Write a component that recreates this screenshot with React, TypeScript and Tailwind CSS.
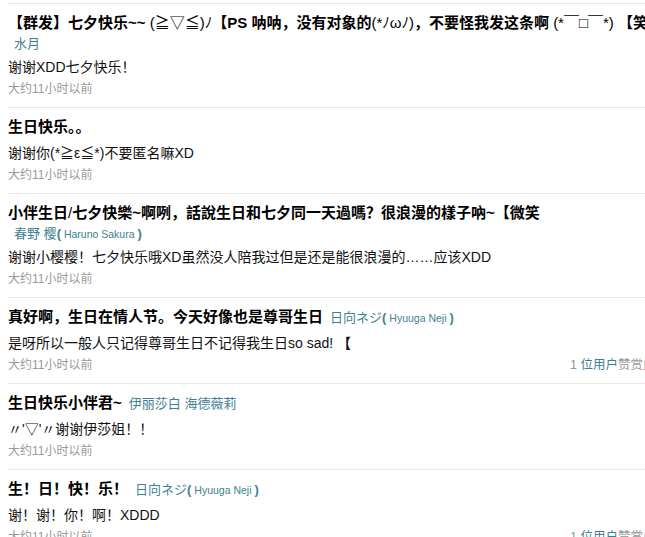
import React from "react";

const FONT = '"Liberation Sans", "Noto Sans CJK SC", sans-serif';

function Name({ cn, en }: { cn: string; en?: string }) {
  return (
    <span className="text-[13px] text-[#3f7f92] font-normal">
      {cn}
      {en && (
        <>
          <span className="font-bold">(</span>
          <span className="text-[10.5px]"> {en} </span>
          <span className="font-bold">)</span>
        </>
      )}
    </span>
  );
}

function Likes() {
  return (
    <span className="text-[12.5px]">
      <span className="text-[#7f9aa3]">1 </span>
      <span className="text-[#3f7f92]">位用户</span>
      <span className="text-[#999]">赞赏此条</span>
    </span>
  );
}

type Item = {
  title: React.ReactNode;
  inlineName?: React.ReactNode;
  belowName?: React.ReactNode;
  body: React.ReactNode;
  likes?: boolean;
};

const items: Item[] = [
  {
    title: (
      <>
        【群发】七夕快乐~~ <span className="font-normal">(≧▽≦)ﾉ</span>【PS 呐呐，没有对象的
        <span className="font-normal">(*ﾉωﾉ)</span>，不要怪我发这条啊{" "}
        <span className="font-normal">(*￣□￣*)</span> 【笑一个吧】
      </>
    ),
    belowName: <Name cn="水月" />,
    body: <>谢谢XDD七夕快乐！</>,
  },
  {
    title: <>生日快乐。。</>,
    body: <>谢谢你(*≧ε≦*)不要匿名嘛XD</>,
  },
  {
    title: (
      <>
        小伴生日<span className="font-normal">/</span>七夕快樂~啊咧，話說生日和七夕同一天過嗎？很浪漫的樣子吶~【微笑
      </>
    ),
    belowName: <Name cn="春野 樱" en="Haruno Sakura" />,
    body: <>谢谢小樱樱！七夕快乐哦XD虽然没人陪我过但是还是能很浪漫的……应该XDD</>,
  },
  {
    title: <>真好啊，生日在情人节。今天好像也是尊哥生日</>,
    inlineName: <Name cn="日向ネジ" en="Hyuuga Neji" />,
    body: (
      <>
        是呀所以一般人只记得尊哥生日不记得我生日so sad! <span className="font-bold">【</span>
      </>
    ),
    likes: true,
  },
  {
    title: <>生日快乐小伴君~</>,
    inlineName: <Name cn="伊丽莎白 海德薇莉" />,
    body: <>〃'▽'〃谢谢伊莎姐！！</>,
  },
  {
    title: <>生！日！快！乐！</>,
    inlineName: <Name cn="日向ネジ" en="Hyuuga Neji" />,
    body: <>谢！谢！你！啊！XDDD</>,
    likes: true,
  },
];

export default function App() {
  return (
    <div
      className="w-[645px] h-[537px] overflow-hidden bg-white pt-[3px] pl-2"
      style={{ fontFamily: FONT }}
    >
      <div className="w-[660px]">
        {items.map((it, i) => (
          <div key={i} className="border-t border-[#e8e8e8] pt-2 pb-2">
            <div className="h-[22px] leading-[22px] whitespace-nowrap text-[15px] font-bold text-black">
              {it.title}
              {it.inlineName && <span className="ml-[7px]">{it.inlineName}</span>}
            </div>
            {it.belowName && (
              <div className="h-[18px] leading-[18px] pl-[6px] whitespace-nowrap">{it.belowName}</div>
            )}
            <div className="mt-[3px] h-[24px] leading-[24px] text-[14px] text-[#111] whitespace-nowrap">
              {it.body}
            </div>
            <div className="h-[20px] leading-[20px] flex justify-between items-center whitespace-nowrap">
              <span className="text-[12px] text-[#999]">大约11小时以前</span>
              {it.likes && <Likes />}
            </div>
          </div>
        ))}
      </div>
    </div>
  );
}
